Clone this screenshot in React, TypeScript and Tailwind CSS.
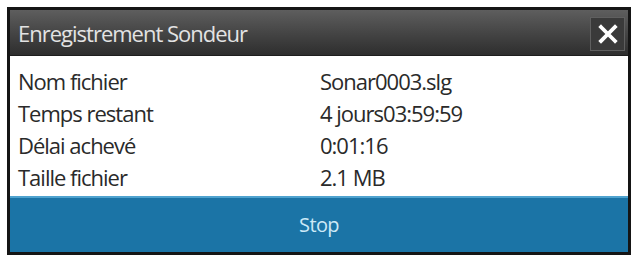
import React from "react";

const rows: [string, string][] = [
  ["Nom fichier", "Sonar0003.slg"],
  ["Temps restant", "4 jours03:59:59"],
  ["Délai achevé", "0:01:16"],
  ["Taille fichier", "2.1 MB"],
];

export default function App() {
  return (
    <div className="w-[635px] h-[257px] bg-white pt-[7px] pl-[7px]" style={{ fontFamily: "'Open Sans', sans-serif" }}>
      <div className="w-[624px] h-[248px] border-[3px] border-[#151515] flex flex-col bg-white">
        <div className="h-[46px] flex items-center justify-between pl-[8px] pr-[3px] bg-gradient-to-b from-[#5e5e5e] to-[#2e2e2e] border-b border-[#1e1e1e]">
          <span className="text-[22px] font-medium text-[#e3e3e3] leading-none tracking-[-1px]">Enregistrement Sondeur</span>
          <div className="w-[35px] h-[34px] mt-[2px] border border-[#5f5f5f] bg-[#3a3a3a] flex items-center justify-center">
            <svg width="20" height="20" viewBox="0 0 20 20">
              <path d="M3 3 L17 17 M17 3 L3 17" stroke="#ffffff" strokeWidth="3.8" strokeLinecap="square" />
            </svg>
          </div>
        </div>
        <div className="h-[140px] pt-[9px] pl-[8px] flex flex-col">
          {rows.map(([k, v]) => (
            <div key={k} className="flex h-[32px] items-center text-[22px] font-medium text-[#2a2a2a] tracking-[-1px]">
              <span className="w-[302px]">{k}</span>
              <span>{v}</span>
            </div>
          ))}
        </div>
        <div className="flex-1 bg-[#1b74a6] border-t-2 border-[#4fa3cf] flex items-center justify-center">
          <span className="text-[20px] font-medium text-[#cde9f7] tracking-[-0.6px]">Stop</span>
        </div>
      </div>
    </div>
  );
}
